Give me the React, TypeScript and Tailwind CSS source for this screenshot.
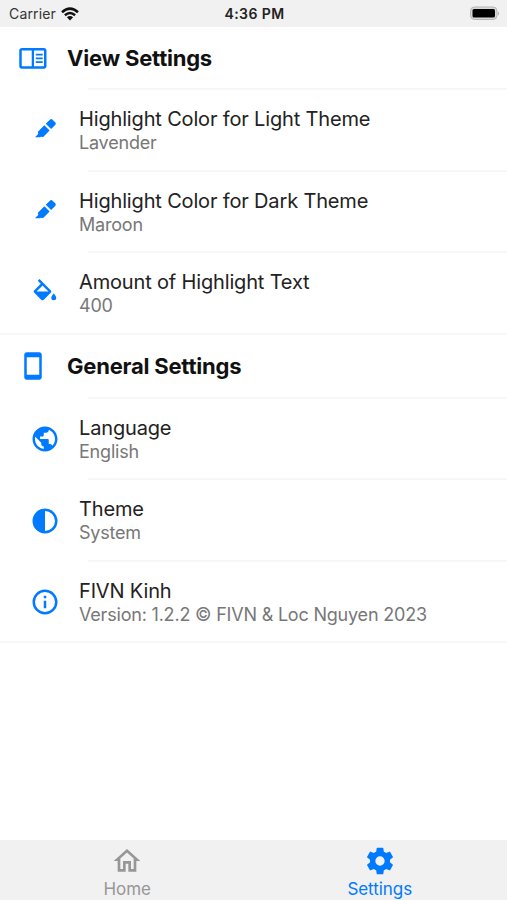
import React, { useState } from 'react';

// 24x24 icon outlines
const icons = {
  reader: 'M20.8 4H3c-1.1 0-2 .9-2 2v12.500c0 1.100.900 2 2 2h17.800c1.100 0 2-.900 2-2V6c0-1.100-.900-2-2-2zM3 18.500V6h8v12.500H3zm17.800 0h-8V6h8v12.500zM14.200 8.500h5.600V10h-5.600zM14.200 11.500h5.600V13h-5.600zM14.200 14.500h5.600V16h-5.600z',
  highlight: 'M4,17L6.75,14.25L6.72,14.23C6.14,13.64 6.14,12.69 6.72,12.11L11.46,7.37L15.7,11.61L10.96,16.35C10.39,16.93 9.46,16.93 8.87,16.37L8.24,17H4M15.91,2.91C16.5,2.33 17.45,2.33 18.03,2.91L20.16,5.03C20.74,5.62 20.74,6.57 20.16,7.16L16.86,10.45L12.62,6.21L15.91,2.91Z',
  fill: 'M19,11.5C19,11.5 17,13.67 17,15A2,2 0 0,0 19,17A2,2 0 0,0 21,15C21,13.67 19,11.5 19,11.5M5.21,10L10,5.21L14.79,10M16.56,8.94L7.62,0L6.21,1.41L8.59,3.79L3.44,8.94C2.85,9.5 2.85,10.47 3.44,11.06L8.94,16.56C9.23,16.85 9.62,17 10,17C10.38,17 10.77,16.85 11.06,16.56L16.56,11.06C17.15,10.47 17.15,9.5 16.56,8.94Z',
  phone: 'M17 1H7c-1.1 0-2 .9-2 2v18c0 1.1.9 2 2 2h10c1.1 0 2-.9 2-2V3c0-1.1-.9-2-2-2zm0 18H7V5h10v14z',
  earth: 'M12 2C6.48 2 2 6.48 2 12s4.48 10 10 10 10-4.48 10-10S17.52 2 12 2zm-1 17.930c-3.950-.490-7-3.850-7-7.930 0-.620.080-1.210.210-1.790L9 15v1c0 1.100.900 2 2 2v1.930zm6.900-2.540c-.260-.810-1-1.390-1.900-1.390h-1v-3c0-.550-.450-1-1-1H8v-2h2c.550 0 1-.450 1-1V7h2c1.100 0 2-.900 2-2v-.410c2.930 1.190 5 4.060 5 7.410 0 2.080-.800 3.970-2.100 5.390z',
  contrast: 'M12 2a10 10 0 1 0 0 20 10 10 0 0 0 0-20zm0 2a8 8 0 0 1 0 16V4z',
  info: 'M11 7h2v2h-2zM11 11h2v6h-2zM12 2a10 10 0 1 0 0 20 10 10 0 0 0 0-20zm0 18a8 8 0 1 1 0-16 8 8 0 0 1 0 16z',
  home: 'M12,5.69L17,10.19V18H15V12H9V18H7V10.19L12,5.69M12,3L2,12H5V20H11V14H13V20H19V12H22L12,3Z',
  cog: 'M12,15.5A3.5,3.5 0 0,1 8.5,12A3.5,3.5 0 0,1 12,8.5A3.5,3.5 0 0,1 15.5,12A3.5,3.5 0 0,1 12,15.5M19.43,12.97C19.47,12.65 19.5,12.33 19.5,12C19.5,11.67 19.47,11.34 19.43,11L21.54,9.37C21.73,9.22 21.78,8.95 21.66,8.73L19.66,5.27C19.54,5.05 19.27,4.96 19.05,5.05L16.56,6.05C16.04,5.66 15.5,5.32 14.87,5.07L14.5,2.42C14.46,2.18 14.25,2 14,2H10C9.75,2 9.54,2.18 9.5,2.42L9.13,5.07C8.5,5.32 7.96,5.66 7.44,6.05L4.95,5.05C4.73,4.96 4.46,5.05 4.34,5.27L2.34,8.73C2.21,8.95 2.27,9.22 2.46,9.37L4.57,11C4.53,11.34 4.5,11.67 4.5,12C4.5,12.33 4.53,12.65 4.57,12.97L2.46,14.63C2.27,14.78 2.21,15.05 2.34,15.27L4.34,18.73C4.46,18.95 4.73,19.03 4.95,18.95L7.44,17.94C7.96,18.34 8.5,18.68 9.13,18.93L9.5,21.58C9.54,21.82 9.75,22 10,22H14C14.25,22 14.46,21.82 14.5,21.58L14.87,18.93C15.5,18.67 16.04,18.34 16.56,17.94L19.05,18.95C19.27,19.03 19.54,18.95 19.66,18.73L21.66,15.27C21.78,15.05 21.73,14.78 21.54,14.63L19.43,12.97Z',
};

type IconName = keyof typeof icons;

function Icon({ name, className }: { name: IconName; className?: string }) {
  return (
    <svg viewBox="0 0 24 24" fill="currentColor" fillRule="evenodd" className={`shrink-0 ${className ?? ''}`}>
      <path d={icons[name]} />
    </svg>
  );
}

const sections: {
  title: string;
  icon: IconName;
  height: string;
  items: { icon: IconName; label: string; value: string }[];
}[] = [
  {
    title: 'View Settings',
    icon: 'reader',
    height: 'h-[61px]',
    items: [
      { icon: 'highlight', label: 'Highlight Color for Light Theme', value: 'Lavender' },
      { icon: 'highlight', label: 'Highlight Color for Dark Theme', value: 'Maroon' },
      { icon: 'fill', label: 'Amount of Highlight Text', value: '400' },
    ],
  },
  {
    title: 'General Settings',
    icon: 'phone',
    height: 'h-[62px]',
    items: [
      { icon: 'earth', label: 'Language', value: 'English' },
      { icon: 'contrast', label: 'Theme', value: 'System' },
      { icon: 'info', label: 'FIVN Kinh', value: 'Version: 1.2.2 © FIVN & Loc Nguyen 2023' },
    ],
  },
];

function StatusBar() {
  return (
    <div className="grid h-[27px] grid-cols-3 items-center bg-[#f1f1f1] pl-[9px] pr-[7px] text-[14px] leading-[27px] text-[#222]">
      <div className="flex items-center gap-[5px]">
        <span className="tracking-[0.15px] text-[#333]">Carrier</span>
        <svg viewBox="0 0 18 14" className="h-[14px] w-[18px]" fill="none" stroke="#111" strokeWidth="2.500">
          <path d="M1 5.200Q9 -2 17 5.200" />
          <path d="M3.900 8.200Q9 3.800 14.100 8.200" />
          <path d="M9 13.500L5.900 10.300Q9 7.800 12.100 10.300Z" fill="#111" stroke="none" />
        </svg>
      </div>
      <span className="text-center font-semibold tracking-[0.4px]">4:36 PM</span>
      <svg viewBox="0 0 31 15" className="h-[15px] w-[31px] justify-self-end">
        <rect x="1.500" y="1" width="26.500" height="12.500" rx="4" fill="#d9d9d9" stroke="#b5b5b5" />
        <rect x="3.500" y="3" width="22.500" height="8.500" rx="1.500" fill="#000" />
        <path d="M29 5.500q2 2 0 4z" fill="#aaa" />
      </svg>
    </div>
  );
}

export default function App() {
  const [tab, setTab] = useState('Settings');

  const tabs: { name: string; icon: IconName }[] = [
    { name: 'Home', icon: 'home' },
    { name: 'Settings', icon: 'cog' },
  ];

  return (
    <div className="flex h-[900px] w-full flex-col overflow-hidden bg-white font-['Inter',sans-serif]">
      <StatusBar />

      <main className="flex-1">
        {sections.map((section) => (
          <section key={section.title} className="border-b-2 border-[#f7f7f7]">
            <div className={`flex items-center gap-[19px] pl-[18px] pt-px ${section.height}`}>
              <Icon name={section.icon} className="size-[30px] text-[#007aff]" />
              <h2 className="pt-px text-[22px] font-bold tracking-[-0.22px] text-[#111]">{section.title}</h2>
            </div>
            {section.items.map((item) => (
              <div key={item.label}>
                <div className="ml-[88px] h-[2px] bg-[#f7f7f7]" />
                <div className="flex h-[79.5px] items-center gap-[19px] pl-[30px] pt-[2px]">
                  <Icon name={item.icon} className="size-[30px] text-[#007aff]" />
                  <div>
                    <div className="text-[20px] leading-[24px] tracking-[-0.16px] text-[#222]">{item.label}</div>
                    <div className="text-[18px] leading-[23px] tracking-[-0.2px] text-[#777]">{item.value}</div>
                  </div>
                </div>
              </div>
            ))}
          </section>
        ))}
      </main>

      <nav className="flex h-[60px] bg-[#f1f1f1]">
        {tabs.map((t) => (
          <button
            key={t.name}
            onClick={() => setTab(t.name)}
            className={`flex flex-1 flex-col items-center pt-[5px] ${tab === t.name ? 'pr-px text-[#007aff]' : 'pl-px text-[#979797]'}`}
          >
            <Icon name={t.icon} className="size-[32px]" />
            <span className="text-[17px] leading-6 tracking-[-0.05px]">{t.name}</span>
          </button>
        ))}
      </nav>
    </div>
  );
}
